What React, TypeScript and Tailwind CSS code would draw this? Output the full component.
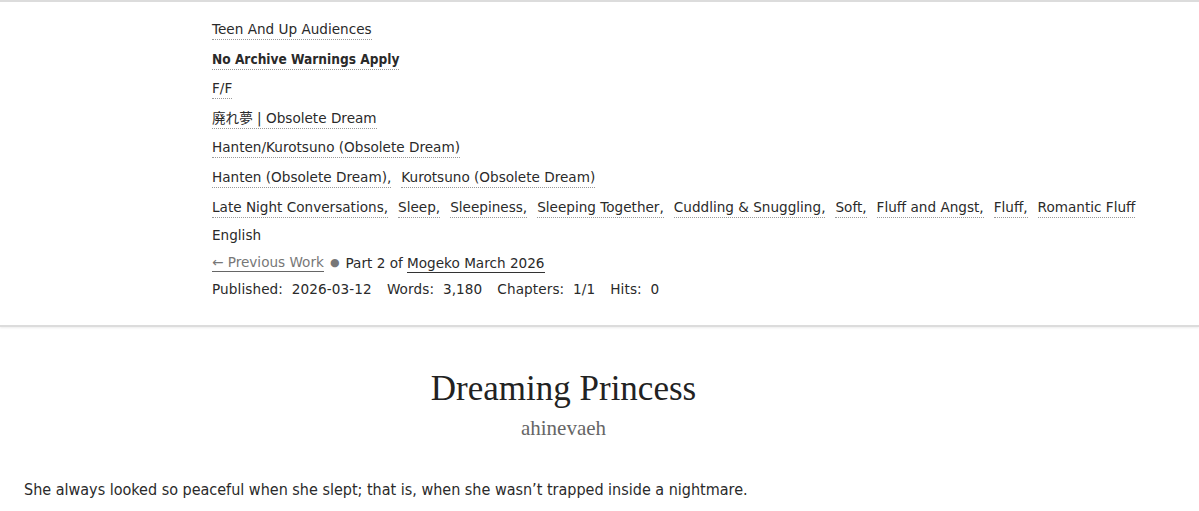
import React from 'react';

const sans = { fontFamily: '"DejaVu Sans", "Noto Sans CJK JP", sans-serif' };
const condensed = { fontFamily: '"DejaVu Sans Condensed", "DejaVu Sans", "Noto Sans CJK JP", sans-serif' };

const TagList: React.FC<{ tags: string[]; bold?: boolean }> = ({ tags, bold }) => (
  <div
    className={`flex flex-wrap gap-x-[10px] h-[29.6px] items-start pt-[18px] ${bold ? 'font-bold' : ''}`}
    style={bold ? condensed : undefined}
  >
    {tags.map((t, i) => (
      <span key={t} className="border-b border-dotted border-[#999] leading-[20px] -mt-[10px]">
        {t}
        {i < tags.length - 1 ? ',' : ''}
      </span>
    ))}
  </div>
);

const App: React.FC = () => {
  const rows: { tags: string[]; bold?: boolean }[] = [
    { tags: ['Teen And Up Audiences'] },
    { tags: ['No Archive Warnings Apply'], bold: true },
    { tags: ['F/F'] },
    { tags: ['廃れ夢 | Obsolete Dream'] },
    { tags: ['Hanten/Kurotsuno (Obsolete Dream)'] },
    { tags: ['Hanten (Obsolete Dream)', 'Kurotsuno (Obsolete Dream)'] },
    {
      tags: [
        'Late Night Conversations',
        'Sleep',
        'Sleepiness',
        'Sleeping Together',
        'Cuddling & Snuggling',
        'Soft',
        'Fluff and Angst',
        'Fluff',
        'Romantic Fluff',
      ],
    },
  ];

  return (
    <div className="w-[1199px] h-[511px] bg-white text-[#2a2a2a] overflow-hidden">
      {/* work meta */}
      <div
        className="border-y-2 border-[#dcdcdc] shadow-[0_1px_2px_rgba(0,0,0,0.08)] pl-[212px] pt-[9px] pb-[22px] text-[13.6px]"
        style={sans}
      >
        {rows.map((r, i) => (
          <TagList key={i} tags={r.tags} bold={r.bold} />
        ))}
        <div className="h-[31px] leading-[28px] pt-[3px]">English</div>
        <div className="h-[27px] leading-[26px] flex items-center gap-[6px]">
          <span className="text-[#777] border-b border-[#666] leading-[18px]">← Previous Work</span>
          <span className="text-[#777] text-[11px]">●</span>
          <span>
            Part 2 of{' '}
            <span className="border-b border-[#333] leading-[18px] inline-block">Mogeko March 2026</span>
          </span>
        </div>
        <div className="h-[27px] leading-[27px] flex gap-[15px] tracking-[0.1px]">
          <span>Published:&nbsp; 2026-03-12</span>
          <span>Words:&nbsp; 3,180</span>
          <span>Chapters:&nbsp; 1/1</span>
          <span>Hits:&nbsp; 0</span>
        </div>
      </div>

      {/* preface */}
      <div
        className="text-center pt-[42px] pl-[24px] pr-[96px]"
        style={{ fontFamily: '"Liberation Serif", "DejaVu Serif", serif' }}
      >
        <h2 className="text-[35px] leading-[40px] text-[#222]">Dreaming Princess</h2>
        <h3 className="text-[21px] leading-[36px] text-[#666] mt-[1px]">ahinevaeh</h3>
      </div>

      <p
        className="pl-[24px] mt-[33px] text-[16px] leading-[21px] text-[#2a2a2a]"
        style={condensed}
      >
        She always looked so peaceful when she slept; that is, when she wasn’t trapped inside a nightmare.
      </p>
    </div>
  );
};

export default App;
